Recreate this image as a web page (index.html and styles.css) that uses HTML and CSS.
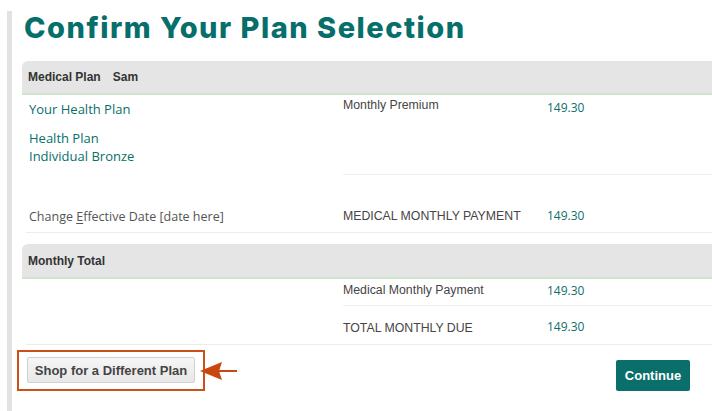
FILE: index.html
```html
<!DOCTYPE html>
<html lang="en">
<head>
<meta charset="utf-8">
<title>Confirm Your Plan Selection</title>
<link rel="stylesheet" href="styles.css">
</head>
<body>
<div class="page">
  <h1 class="title">Confirm Your Plan Selection</h1>

  <section class="panel">
    <div class="panel-head"><span>Medical Plan</span><span class="who">Sam</span></div>
    <div class="grid grid-plan">
      <div class="cell left top">
        <div class="plan-link">Your Health Plan</div>
        <div class="plan-name">
          <div class="plan-line">Health Plan</div>
          <div class="plan-line">Individual Bronze</div>
        </div>
      </div>
      <div class="cell right r1 sep">
        <span class="label">Monthly Premium</span><span class="value">149.30</span>
      </div>
      <div class="cell left bottom">
        <span class="muted">Change <u>E</u>ffective Date [date here]</span>
      </div>
      <div class="cell right bottom">
        <span class="label">MEDICAL MONTHLY PAYMENT</span><span class="value">149.30</span>
      </div>
    </div>
  </section>

  <section class="panel panel-total">
    <div class="panel-head panel-head-tall"><span>Monthly Total</span></div>
    <div class="grid grid-total">
      <div class="cell left span2"></div>
      <div class="cell right t1 sep">
        <span class="label">Medical Monthly Payment</span><span class="value">149.30</span>
      </div>
      <div class="cell right t2">
        <span class="label">TOTAL MONTHLY DUE</span><span class="value">149.30</span>
      </div>
    </div>
  </section>

  <div class="footer">
    <div class="annot">
      <div class="highlight">
        <button class="btn-secondary" type="button">Shop for a Different Plan</button>
      </div>
      <svg class="arrow" width="38" height="22" viewBox="0 0 38 22" aria-hidden="true">
        <polygon points="0,11 22,2 19,11 22,20" fill="#c9470f"/>
        <line x1="19" y1="11" x2="37" y2="11" stroke="#c9470f" stroke-width="2"/>
      </svg>
    </div>
    <button class="btn-primary" type="button">Continue</button>
  </div>
</div>
</body>
</html>
```

FILE: styles.css
```css
html, body {
  margin: 0;
  padding: 0;
  background: #ffffff;
  overflow: hidden;
}

.page {
  margin-left: 7px;
  border-left: 5px solid #e2e2e2;
  padding-left: 10px;
  min-height: 411px;
  box-sizing: border-box;
}

.title {
  margin: 11px 0 16px 2px;
  font-family: Inter, "Open Sans", sans-serif;
  font-weight: 800;
  font-size: 29px;
  line-height: 34px;
  color: #066f6b;
  letter-spacing: 1.5px;
  white-space: nowrap;
}

.panel-head {
  display: flex;
  align-items: center;
  height: 32px;
  padding-left: 6px;
  background: #e5e5e5;
  border-top-left-radius: 6px;
  border-bottom: 2px solid #cfe4cf;
  font-family: "Liberation Sans", Arial, sans-serif;
  font-weight: bold;
  font-size: 12px;
  color: #333333;
}

.panel-head-tall {
  height: 33px;
}

.who {
  margin-left: 12px;
}

.panel-total {
  margin-top: 11px;
}

.grid {
  display: grid;
  grid-template-columns: 317px 1fr;
  margin-left: 4px;
  border-bottom: 1px solid #ececec;
}

.grid-plan {
  grid-template-rows: 80px 57px;
}

.grid-total {
  grid-template-rows: 27px 38px;
}

.cell {
  box-sizing: border-box;
  line-height: 16px;
}

.left {
  padding-left: 3px;
}

.span2 {
  grid-row: 1 / span 2;
}

.right {
  display: flex;
  align-items: flex-start;
}

.sep {
  border-bottom: 1px solid #f0f0f0;
}

.label {
  width: 204px;
  flex: none;
  font-family: "Liberation Sans", Arial, sans-serif;
  font-size: 12.3px;
  color: #454545;
}

.value {
  font-family: "Open Sans", sans-serif;
  font-size: 12px;
  color: #0d6f6b;
}

.top {
  padding-top: 6px;
}

.plan-link,
.plan-name {
  font-family: "Open Sans", sans-serif;
  font-size: 13px;
  color: #086f6b;
}

.plan-name {
  margin-top: 12px;
}

.plan-line {
  line-height: 18px;
}

.r1 .label { padding-top: 2px; }
.r1 .value { padding-top: 5px; }

.bottom {
  display: flex;
  align-items: flex-end;
  padding-bottom: 7px;
}

.bottom.right {
  padding-bottom: 8px;
}

.muted {
  font-family: "Open Sans", sans-serif;
  font-size: 12.5px;
  color: #555555;
}

.muted u {
  text-decoration-thickness: 1px;
  text-underline-offset: 2px;
}

.t1 .label { padding-top: 3px; }
.t1 .value { padding-top: 4px; }
.t2 .label { padding-top: 14px; }
.t2 .value { padding-top: 13px; }

.footer {
  display: flex;
  justify-content: space-between;
  align-items: flex-start;
  margin-top: 5px;
  margin-left: -5px;
  padding-right: 22px;
}

.annot {
  display: flex;
  align-items: center;
}

.highlight {
  border: 2px solid #cc4f17;
  padding: 5px 8px 6px 8px;
}

.btn-secondary {
  display: block;
  height: 26px;
  width: 168px;
  padding: 0;
  border: 1px solid #d2d2d2;
  border-radius: 2px;
  background: linear-gradient(#f6f6f6, #e7e7e7);
  font-family: "Liberation Sans", Arial, sans-serif;
  font-weight: bold;
  font-size: 13px;
  color: #444444;
}

.arrow {
  display: block;
  margin-left: -5px;
}

.btn-primary {
  margin-top: 10px;
  width: 74px;
  height: 31px;
  padding: 0;
  border: none;
  border-radius: 2px;
  background: #0a6f6a;
  font-family: "Liberation Sans", Arial, sans-serif;
  font-weight: bold;
  font-size: 13px;
  color: #ffffff;
}
```
